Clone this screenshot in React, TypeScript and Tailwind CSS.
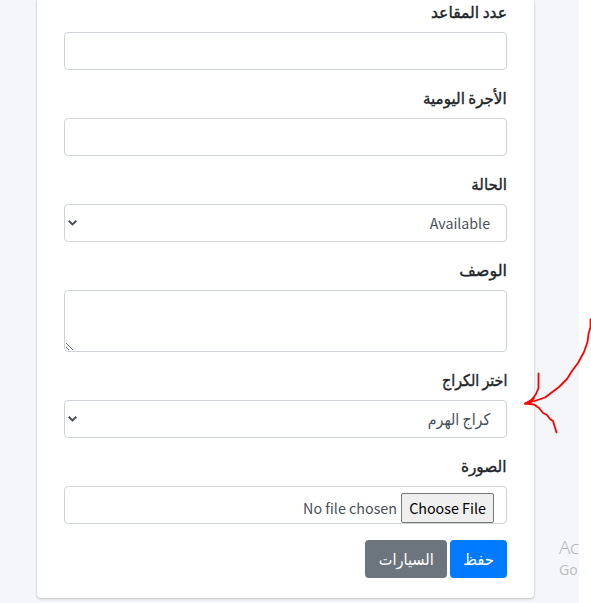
import type { ReactNode } from 'react';

const box =
  'block w-full rounded-[4px] border border-[#ced4da] bg-white text-[#495057] outline-none';

function Field({ label, scale, children }: { label: string; scale: string; children: ReactNode }) {
  return (
    <div className="mb-4">
      <label className="mb-2 flex h-6 whitespace-nowrap text-[16px] leading-[22px] text-[#212529]">
        <span className={`origin-right [-webkit-text-stroke:0.4px_#212529] ${scale}`}>{label}</span>
      </label>
      {children}
    </div>
  );
}

function Select({ children }: { children: ReactNode }) {
  return (
    <div className={`${box} flex h-[38px] items-center justify-between pl-[3px] pr-4`}>
      {children}
      <svg className="h-[6px] w-[9px] shrink-0" viewBox="0 0 9 6" fill="none" stroke="#495057" strokeWidth="2">
        <path d="M0.7 0.8 4.5 4.4 8.3 0.8" />
      </svg>
    </div>
  );
}

export default function App() {
  return (
    <div className="relative h-[603px] w-[591px] overflow-hidden bg-white font-['Noto_Sans_CJK_SC','DejaVu_Sans',sans-serif]">
      <div className="h-full w-[579px] bg-[#f4f6f9] pl-[37px]">
        <main
          dir="rtl"
          className="h-[598px] w-[497px] rounded-b-[4px] bg-white px-[27px] shadow-[0_0_1px_rgba(0,0,0,0.125),0_1px_3px_rgba(0,0,0,0.2)]"
        >
          <Field label="عدد المقاعد" scale="scale-x-[0.976]">
            <input className={`${box} h-[38px] px-3`} />
          </Field>
          <Field label="الأجرة اليومية" scale="scale-x-[0.944]">
            <input className={`${box} h-[38px] px-3`} />
          </Field>
          <Field label="الحالة" scale="scale-x-[0.94]">
            <Select>
              <span className="pt-px text-[14.2px]">Available</span>
            </Select>
          </Field>
          <Field label="الوصف" scale="scale-x-[1]">
            <textarea className={`${box} h-[62px] resize-y px-3`} />
          </Field>
          <Field label="اختر الكراج" scale="scale-x-[0.89]">
            <Select>
              <span className="origin-right scale-x-[0.89] pb-[2px] text-[16px]">كراج الهرم</span>
            </Select>
          </Field>
          <Field label="الصورة" scale="scale-x-[0.96]">
            <div className={`${box} flex h-[38px] items-start gap-1 overflow-hidden pr-3 pt-[6px] text-[14.3px]`}>
              <span className="flex h-[30px] w-[93px] shrink-0 items-center justify-center whitespace-nowrap rounded-[2px] border border-[#767676] bg-[#efefef] text-black">
                Choose File
              </span>
              <span className="leading-[30px]">No file chosen</span>
            </div>
          </Field>
          <div className="flex gap-[3px] text-[16px] text-white">
            <button className="flex h-[38px] w-[57px] items-center justify-center rounded-[4px] bg-[#007bff] pb-[2px]">
              <span className="scale-x-[0.93]">حفظ</span>
            </button>
            <button className="flex h-[38px] w-[82px] items-center justify-center rounded-[4px] bg-[#6c757d] pb-[2px]">
              <span className="scale-x-[0.91]">السيارات</span>
            </button>
          </div>
        </main>
      </div>
      <div className="absolute left-[559px] top-[535px] whitespace-nowrap font-['Open_Sans','Noto_Sans',sans-serif] text-[#bbbcbf]">
        <div className="text-[19px] font-light leading-[25px] tracking-[-0.5px] text-[#b2b3b6]">Ac</div>
        <div className="text-[14px] leading-5">Go</div>
      </div>
      <svg className="absolute left-0 top-0" width="591" height="603" fill="none" stroke="#f00" strokeWidth="1.8" strokeLinecap="round" strokeLinejoin="round">
        <path d="M590.5 319.5V327L588.5 334L587.5 342L584 352L578 363L572 371L567 379L559 387L551 393L545 397.500L536 400.500L525 403.500" />
        <path d="M538.500 373.500V388L536 394L531 401L525 403.500L534 404.500L539 408L543 413L547 415L550 419L553 421L556.500 432.500" />
        <path d="M526 403.500L534 398L531 402Z" fill="#f00" />
      </svg>
    </div>
  );
}
